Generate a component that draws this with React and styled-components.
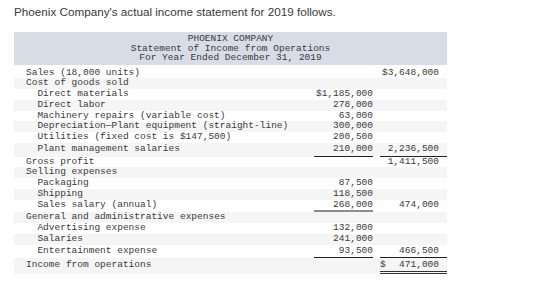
import styled, { createGlobalStyle, css } from "styled-components";

const GlobalStyle = createGlobalStyle`
  body {
    margin: 0;
    background: #fff;
  }
`;

const Page = styled.div`
  padding: 4px 14px 0 14px;
  width: 560px;
  height: 300px;
  box-sizing: border-box;
`;

const Title = styled.p`
  margin: 0;
  font-family: "Liberation Sans", Arial, sans-serif;
  font-size: 11.7px;
  line-height: 16px;
  color: #3a3a3a;
`;

const Statement = styled.div`
  margin-top: 12px;
  width: 433px;
  font-family: "Liberation Mono", "Courier New", monospace;
  font-size: 9.5px;
  color: #3a3a3a;
`;

const Header = styled.div`
  background: #d7dce6;
  padding: 2px 0 2px;
  text-align: center;
  line-height: 9.5px;
  white-space: pre;
`;

const Body = styled.div`
  margin-top: 0.5px;
`;

const Row = styled.div`
  display: grid;
  grid-template-columns: 1fr 59px 67px;
  column-gap: 7px;
  padding-left: 12px;
  line-height: 10.75px;
  white-space: pre;
  padding-top: ${(p) => p.$top || 0}px;

  &:nth-child(even) {
    background: #f5f5f5;
  }
`;

const Label = styled.span`
  padding-left: ${(p) => (p.$indent ? 11.4 : 0)}px;
`;

const rules = {
  single: css`
    border-bottom: 1px solid #222;
    padding-bottom: 0.5px;
  `,
  thick: css`
    border-bottom: 2px solid #8c8c8c;
    padding-bottom: 0;
  `,
  double: css`
    border-bottom: 3px double #333;
    padding-bottom: 0.5px;
  `,
};

const Amount = styled.span`
  text-align: right;
  ${(p) => p.$rule && rules[p.$rule]}
`;

const Total = styled(Amount)`
  padding-right: 8px;
  display: flex;
  justify-content: ${(p) => (p.$dollar ? "space-between" : "flex-end")};
`;

const rows = [
  { label: "Sales (18,000 units)", b: "$3,648,000", top: 2.5 },
  { label: "Cost of goods sold" },
  { label: "Direct materials", indent: true, a: "$1,185,000" },
  { label: "Direct labor", indent: true, a: "278,000" },
  { label: "Machinery repairs (variable cost)", indent: true, a: "63,000" },
  { label: "Depreciation\u2014Plant equipment (straight-line)", indent: true, a: "300,000" },
  { label: "Utilities (fixed cost is $147,500)", indent: true, a: "200,500" },
  { label: "Plant management salaries", indent: true, a: "210,000", aRule: "single", b: "2,236,500", bRule: "single", top: 1.5 },
  { label: "Gross profit", b: "1,411,500" },
  { label: "Selling expenses" },
  { label: "Packaging", indent: true, a: "87,500" },
  { label: "Shipping", indent: true, a: "118,500" },
  { label: "Sales salary (annual)", indent: true, a: "268,000", aRule: "thick", b: "474,000" },
  { label: "General and administrative expenses" },
  { label: "Advertising expense", indent: true, a: "132,000" },
  { label: "Salaries", indent: true, a: "241,000" },
  { label: "Entertainment expense", indent: true, a: "93,500", aRule: "single", b: "466,500", bRule: "single", top: 1 },
  { label: "Income from operations", b: "471,000", dollar: true, bRule: "double", top: 2 },
];

const App = () => {
  return (
    <Page>
      <GlobalStyle />
      <Title>Phoenix Company's actual income statement for 2019 follows.</Title>
      <Statement>
        <Header>
          <div>PHOENIX COMPANY</div>
          <div>Statement of Income from Operations</div>
          <div>For Year Ended December 31, 2019</div>
        </Header>
        <Body>
          {rows.map((r) => (
            <Row key={r.label} $top={r.top}>
              <Label $indent={r.indent}>{r.label}</Label>
              <Amount $rule={r.aRule}>{r.a || ""}</Amount>
              <Total $rule={r.bRule} $dollar={r.dollar}>
                {r.dollar && <span>$</span>}
                <span>{r.b || ""}</span>
              </Total>
            </Row>
          ))}
        </Body>
      </Statement>
    </Page>
  );
};

export default App;
